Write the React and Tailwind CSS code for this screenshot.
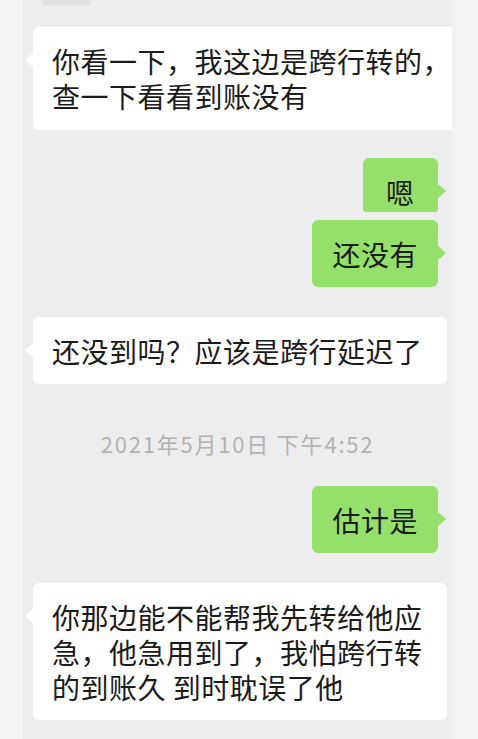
import React from 'react';

const font = { fontFamily: '"Noto Sans CJK SC", "Noto Sans", sans-serif' };

function LeftBubble({ lines, className = '' }) {
  return (
    <div
      className={`relative ml-[10px] self-start rounded-[6px] bg-white pb-[15px] pl-[19px] pr-[24px] pt-[17px] text-[28px] leading-[35px] tracking-[0.5px] text-[#1b1b1b] ${className}`}
    >
      <span className="absolute -left-[8px] top-[26px] h-0 w-0 border-y-[7px] border-r-[8px] border-y-transparent border-r-white" />
      {lines.map((l, i) => (
        <div key={i} className="h-[35px] whitespace-nowrap">{l}</div>
      ))}
    </div>
  );
}

function RightBubble({ text, className = '' }) {
  return (
    <div
      className={`relative mr-[14px] self-end rounded-[6px] bg-[#95e06b] pb-[15px] pt-[17px] text-[28px] leading-[35px] tracking-[0.5px] text-[#1b1b1b] ${className}`}
    >
      <span className="absolute -right-[8px] top-[26px] h-0 w-0 border-y-[7px] border-l-[8px] border-y-transparent border-l-[#95e06b]" />
      <div className="whitespace-nowrap">{text}</div>
    </div>
  );
}

export default function App() {
  return (
    <div className="flex h-[739px] w-[478px] overflow-hidden bg-[#f3f3f3]" style={font}>
      <div className="w-[23px] shrink-0" />
      <div className="flex w-[429px] shrink-0 flex-col overflow-hidden bg-[#ededed]">
        <div className="ml-[20px] h-[5px] w-[47px] bg-[#e2e2e2]" />

        <LeftBubble
          className="mt-[22px] w-[430px] rounded-r-none pb-[16px]"
          lines={['你看一下，我这边是跨行转的，', '查一下看看到账没有']}
        />

        <RightBubble text="嗯" className="mt-[28px] h-[54px] w-[75px] rounded-b-[3px] px-[23px]" />
        <RightBubble text="还没有" className="mt-[8px] px-[20px] pb-[15px]" />

        <LeftBubble className="mt-[30px]" lines={['还没到吗？应该是跨行延迟了']} />

        <div className="mt-[47px] text-center text-[22px] leading-[24px] tracking-[1.8px] text-[#b2b2b2]">
          2021年5月10日 下午4:52
        </div>

        <RightBubble text="估计是" className="mt-[31px] px-[20px]" />

        <LeftBubble
          className="mt-[30px] pb-[14px]"
          lines={['你那边能不能帮我先转给他应', '急，他急用到了，我怕跨行转', '的到账久 到时耽误了他']}
        />
      </div>
      <div className="flex-1" />
    </div>
  );
}
